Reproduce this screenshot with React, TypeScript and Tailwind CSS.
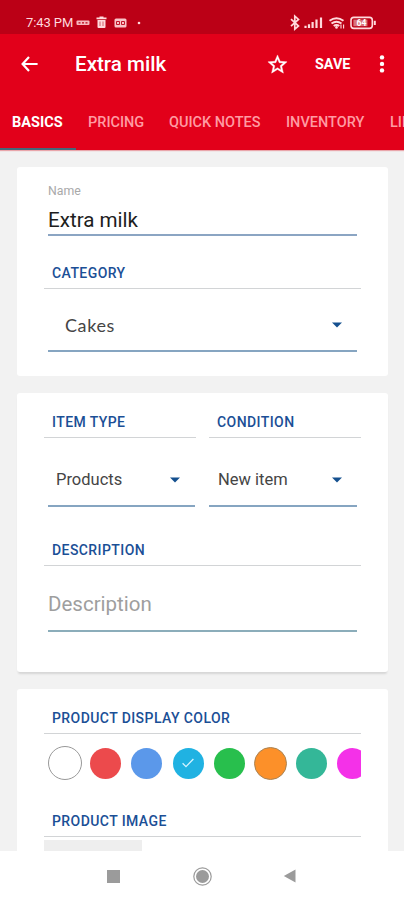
import React from 'react';

const TABS = [
  { label: 'BASICS', cls: 'ml-[12px] w-[76px] font-bold text-white' },
  { label: 'PRICING', cls: 'w-[81px] text-[#ff9ba3]' },
  { label: 'QUICK NOTES', cls: 'w-[117px] text-[#ff9ba3]' },
  { label: 'INVENTORY', cls: 'w-[104px] text-[#ff9ba3]' },
  { label: 'LINKED', cls: 'w-[80px] text-[#ff9ba3]' },
];

function StatusBar() {
  return (
    <div className="flex h-[34px] shrink-0 items-start bg-[#bb0016] pt-[14px] text-[#ffd9dc]">
      <span className="ml-[26px] w-[50px] whitespace-nowrap text-[13px] leading-[18px] tracking-[-0.1px]">7:43 PM</span>
      <svg className="h-[18px] w-[70px]" viewBox="76 14 70 18" fill="none">
        <rect x="76.5" y="20.5" width="13" height="4.6" rx="1" fill="#f7b9be" />
        <path d="M78.5 22.8h2M82 22.8h2M85.5 22.8h2" stroke="#bb0016" strokeWidth="1.3" />
        <path d="M96.5 18.4h10M99.5 17.4h4" stroke="#ffd9dc" strokeWidth="1.6" />
        <path d="M97.5 20h8v7q0 1-1 1h-6q-1 0-1-1z" fill="#ffd9dc" />
        <path d="M100 21.5v4.5M103 21.5v4.5" stroke="#d2606b" strokeWidth="1" />
        <rect x="114.5" y="18.5" width="12" height="9" rx="1.5" fill="#f9c4c8" />
        <path d="M116.5 21.5h3v3h-3zM121.5 21.5h3v3h-3z" stroke="#bb0016" strokeWidth="0.9" />
        <circle cx="139" cy="23" r="1.3" fill="#ffd9dc" />
      </svg>
      <svg className="ml-[142px] h-[18px] w-[90px]" viewBox="288 14 90 18" fill="none" stroke="#ffd9dc">
        <path d="M291 19.2l7.5 6.8-3.7 3.2V16.2l3.7 3.2-7.5 6.8" strokeWidth="1.7" />
        <path d="M305.5 28v-2.2M309 28v-3.8M312.6 28v-6M316.5 28v-8.5M321 28V17.5" strokeWidth="2.2" />
        <path d="M329.5 20.8q7-5.2 14 0M331.5 23.6q5-3.6 10 0M333.7 26q2.8-2 5.6 0" strokeWidth="1.9" />
        <circle cx="336.5" cy="27.4" r="1.3" fill="#ffd9dc" stroke="none" />
        <path d="M341 24.5v4M343.6 24.5v4" strokeWidth="1.1" />
        <rect x="351" y="17.4" width="21.3" height="11" rx="2.8" strokeWidth="1.6" />
        <rect x="353.4" y="19.6" width="14" height="6.6" fill="#d9737c" stroke="none" />
        <path d="M374.8 20.8v4.2" strokeWidth="2" />
        <text x="361.5" y="26" textAnchor="middle" fontSize="8.5" fontWeight="700" fill="#fff" stroke="none">64</text>
      </svg>
    </div>
  );
}

function AppBar() {
  return (
    <div className="flex h-[60px] items-center text-white">
      <svg className="ml-[20px] h-[20px] w-[20px]" viewBox="0 0 20 20" fill="none" stroke="#fff" strokeWidth="2.2">
        <path d="M17.6 10H3M9 3L2.6 10 9 17" />
      </svg>
      <span className="ml-[35px] w-[192px] whitespace-nowrap text-[20.6px] font-medium leading-[24px]">Extra milk</span>
      <svg className="-ml-px h-[23px] w-[23px]" viewBox="0 0 24 24" fill="#fff" stroke="#fff" strokeWidth="0.4">
        <path d="M22 9.24l-7.19-.62L12 2 9.19 8.63 2 9.24l5.46 4.73L5.82 21 12 17.27 18.18 21l-1.63-7.03L22 9.24zM12 15.4l-3.76 2.27 1-4.28-3.32-2.88 4.38-.38L12 6.1l1.71 4.04 4.38.38-3.32 2.88 1 4.28L12 15.4z" />
      </svg>
      <span className="ml-[26px] w-[60px] pt-[2px] text-[14.4px] font-bold leading-[20px]">SAVE</span>
      <svg className="ml-[3px] h-[20px] w-[8px]" viewBox="0 0 8 20" fill="#fff">
        <circle cx="4" cy="3.4" r="2.2" />
        <circle cx="4" cy="9.9" r="2.2" />
        <circle cx="4" cy="16.4" r="2.2" />
      </svg>
    </div>
  );
}

function Tabs() {
  return (
    <div className="flex h-[56px] flex-col overflow-hidden">
      <div className="flex h-[54px] items-center whitespace-nowrap pt-[4px] text-[14.5px] font-medium leading-[20px]">
        {TABS.map((t) => (
          <span key={t.label} className={`shrink-0 ${t.cls}`}>{t.label}</span>
        ))}
      </div>
      <div className="h-[2px] w-[76px] bg-[#44687a]" />
    </div>
  );
}

function Heading({ children, className = '' }: { children: React.ReactNode; className?: string }) {
  return (
    <h2 className={`h-[27px] whitespace-nowrap border-b-[1.5px] border-[#d2d4d6] pl-[8px] pt-[1px] text-[14px] font-medium leading-[20px] tracking-[0.42px] text-[#1b4f96] ${className}`}>
      {children}
    </h2>
  );
}

function Caret({ className = '' }: { className?: string }) {
  return (
    <svg className={`h-[6px] w-[10px] ${className}`} viewBox="0 0 10 6" fill="#15508f">
      <path d="M0 .5h10L5 5.5z" />
    </svg>
  );
}

function Select({ value, className = '' }: { value: string; className?: string }) {
  return (
    <div className={`flex items-center justify-between border-b-2 border-[#86a5c1] text-[#454545] ${className}`}>
      <span className="whitespace-nowrap">{value}</span>
      <Caret />
    </div>
  );
}

const SWATCHES = [
  'size-[34px] border border-[#999] bg-white',
  'size-[31px] bg-[#ec4a4c]',
  'size-[31px] bg-[#5b98ea]',
  'size-[31px] bg-[#20b2e2]',
  'size-[31px] bg-[#28bf4d]',
  'size-[33px] border border-[#a98354] bg-[#fc9029]',
  'size-[31px] bg-[#34b798]',
  'size-[31px] bg-[#f431e8]',
];

export default function App() {
  return (
    <div className="flex h-[900px] w-[404px] flex-col overflow-hidden bg-[#f2f2f2] font-[Roboto,sans-serif]">
      <StatusBar />
      <header className="h-[116px] shrink-0 bg-[#e2001a] shadow-[0_1px_1px_#e9a6ab]">
        <AppBar />
        <Tabs />
      </header>

      <main className="h-[701px] shrink-0 overflow-hidden pl-[17px] pt-[17px]">
        <section className="h-[209px] w-[371px] rounded-[3px] bg-white pl-[27px] pr-[28px] pt-[16px]">
          <div className="mx-[4px] h-[53px] w-[309px] border-b-2 border-[#8ba5c3]">
            <div className="text-[12.3px] leading-[16px] text-[#a9a9a9]">Name</div>
            <div className="pt-[8px] text-[20.6px] leading-[26px] text-[#1d1d1d]">Extra milk</div>
          </div>
          <Heading className="mt-[26px] w-[317px]">CATEGORY</Heading>
          <Select value="Cakes" className="ml-[4px] mt-[11px] h-[52px] w-[309px] pl-[17px] pr-[15px] font-[Lato,sans-serif] text-[18px] tracking-[0.6px]" />
        </section>

        <section className="mt-[17px] h-[279px] w-[371px] rounded-[3px] bg-white pl-[27px] pt-[18px] shadow-[0_3px_2px_-1px_#d6d6d6]">
          <div className="flex gap-[13px]">
            <div className="w-[152px]">
              <Heading>ITEM TYPE</Heading>
              <Select value="Products" className="ml-[4px] mt-[17px] h-[52px] w-[147px] pl-[8px] pr-[15px] text-[16.5px]" />
            </div>
            <div className="w-[152px]">
              <Heading>CONDITION</Heading>
              <Select value="New item" className="mt-[17px] h-[52px] w-[148px] pl-[9px] pr-[15px] text-[16.5px]" />
            </div>
          </div>
          <Heading className="mt-[32px] w-[317px]">DESCRIPTION</Heading>
          <div className="ml-[4px] mt-[13px] h-[53px] w-[309px] border-b-2 border-[#8badba] pt-[12px] text-[20.5px] leading-[26px] text-[#9e9e9e]">Description</div>
        </section>

        <section className="mt-[17px] h-[163px] w-[371px] rounded-t-[3px] bg-white pl-[27px] pt-[18px]">
          <Heading className="w-[317px]">PRODUCT DISPLAY COLOR</Heading>
          <div className="flex h-[58px] w-[317px] items-center overflow-hidden">
            {SWATCHES.map((s, i) => (
              <div key={i} className="flex w-[41.2px] shrink-0 justify-center">
                <div className={`flex shrink-0 items-center justify-center rounded-full ${s}`}>
                  {i === 3 && (
                    <svg className="h-[10px] w-[12px]" viewBox="0 0 12 10" fill="none" stroke="#d4f3ff" strokeWidth="1.3">
                      <path d="M.6 5.2l3.4 3.4L11.4 1" />
                    </svg>
                  )}
                </div>
              </div>
            ))}
          </div>
          <Heading className="mt-[18px] w-[317px]">PRODUCT IMAGE</Heading>
          <div className="mt-[3px] h-[14px] w-[98px] bg-[#eee]" />
        </section>
      </main>

      <nav className="flex h-[49px] shrink-0 items-center bg-white pl-[107px] pt-[1px]">
        <div className="size-[13px] bg-[#9b9b9b]" />
        <svg className="ml-[73px] size-[19px]" viewBox="0 0 19 19">
          <circle cx="9.5" cy="9.5" r="8.7" fill="none" stroke="#9b9b9b" strokeWidth="1.2" />
          <circle cx="9.5" cy="9.5" r="6.5" fill="#9b9b9b" />
        </svg>
        <svg className="ml-[71px] h-[14px] w-[13px]" viewBox="0 0 13 14">
          <path d="M.8 7L12.5.4v13.2z" fill="#9b9b9b" />
        </svg>
      </nav>
    </div>
  );
}
